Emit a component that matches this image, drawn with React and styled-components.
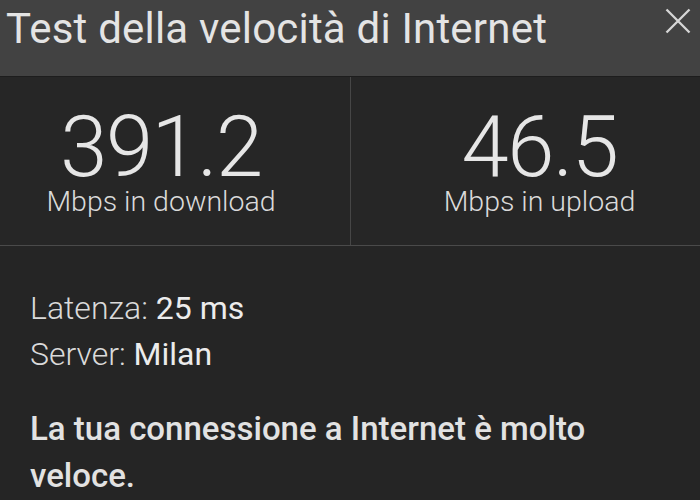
import React from 'react';
import styled, { createGlobalStyle } from 'styled-components';

const GlobalStyle = createGlobalStyle`
  html, body {
    margin: 0;
    padding: 0;
    background: #252525;
  }
  body {
    font-family: Roboto, "Liberation Sans", sans-serif;
  }
`;

const Panel = styled.div`
  width: 700px;
  height: 500px;
  display: flex;
  flex-direction: column;
  background: #252525;
  color: #e4e4e4;
  overflow: hidden;
`;

const Header = styled.div`
  display: flex;
  justify-content: space-between;
  align-items: flex-start;
  flex-shrink: 0;
  height: 77px;
  padding: 0 9px 0 6px;
  background: #424242;
  border-bottom: 1px solid #1d1d1d;
  box-sizing: border-box;
`;

const Title = styled.h1`
  margin: 5px 0 0;
  font-size: 42px;
  font-weight: 400;
  letter-spacing: 0.2px;
  line-height: 48px;
  color: #e4e4e4;
  white-space: nowrap;
`;

const CloseButton = styled.button`
  display: flex;
  margin-top: 8px;
  padding: 0;
  border: none;
  background: none;
  color: #d6d6d6;
  cursor: pointer;
`;

const Stats = styled.div`
  display: grid;
  grid-template-columns: 351px 1fr;
  flex-shrink: 0;
  height: 169px;
  background: #262626;
  border-bottom: 1px solid #4a4a4a;
  box-sizing: border-box;
`;

const Stat = styled.div`
  display: flex;
  flex-direction: column;
  align-items: center;
  padding-top: 34px;
  ${props => props.side === 'left' && 'padding-right: 28px; border-right: 1px solid #464646;'}
  ${props => props.side === 'right' && 'padding-left: 28px;'}
`;

const Value = styled.div`
  font-size: 85px;
  font-weight: 300;
  letter-spacing: -1.5px;
  line-height: 72px;
  color: #e6e6e6;
`;

const Unit = styled.div`
  margin-top: 2px;
  font-size: 28.5px;
  font-weight: 300;
  line-height: 34px;
  color: #dadada;
`;

const Details = styled.div`
  padding: 39px 30px 0;
`;

const InfoLine = styled.div`
  font-size: 32px;
  line-height: 46px;
  font-weight: 300;
  color: #dadada;
`;

const InfoValue = styled.span`
  font-weight: 400;
  color: #ececec;
`;

const Verdict = styled.p`
  margin: 28px 0 0;
  font-size: 33px;
  font-weight: 500;
  line-height: 47px;
  color: #e2e2e2;
`;

const CloseIcon = () => (
  <svg width="26" height="26" viewBox="0 0 26 26">
    <path d="M1.5 1.5 L24.5 24.5 M24.5 1.5 L1.5 24.5" stroke="currentColor" strokeWidth="2.3" />
  </svg>
);

const App = () => (
  <>
    <GlobalStyle />
    <Panel>
      <Header>
        <Title>Test della velocità di Internet</Title>
        <CloseButton aria-label="Chiudi"><CloseIcon /></CloseButton>
      </Header>
      <Stats>
        <Stat side="left">
          <Value>391.2</Value>
          <Unit>Mbps in download</Unit>
        </Stat>
        <Stat side="right">
          <Value>46.5</Value>
          <Unit>Mbps in upload</Unit>
        </Stat>
      </Stats>
      <Details>
        <InfoLine>Latenza: <InfoValue>25 ms</InfoValue></InfoLine>
        <InfoLine>Server: <InfoValue>Milan</InfoValue></InfoLine>
        <Verdict>La tua connessione a Internet è molto veloce.</Verdict>
      </Details>
    </Panel>
  </>
);

export default App;
